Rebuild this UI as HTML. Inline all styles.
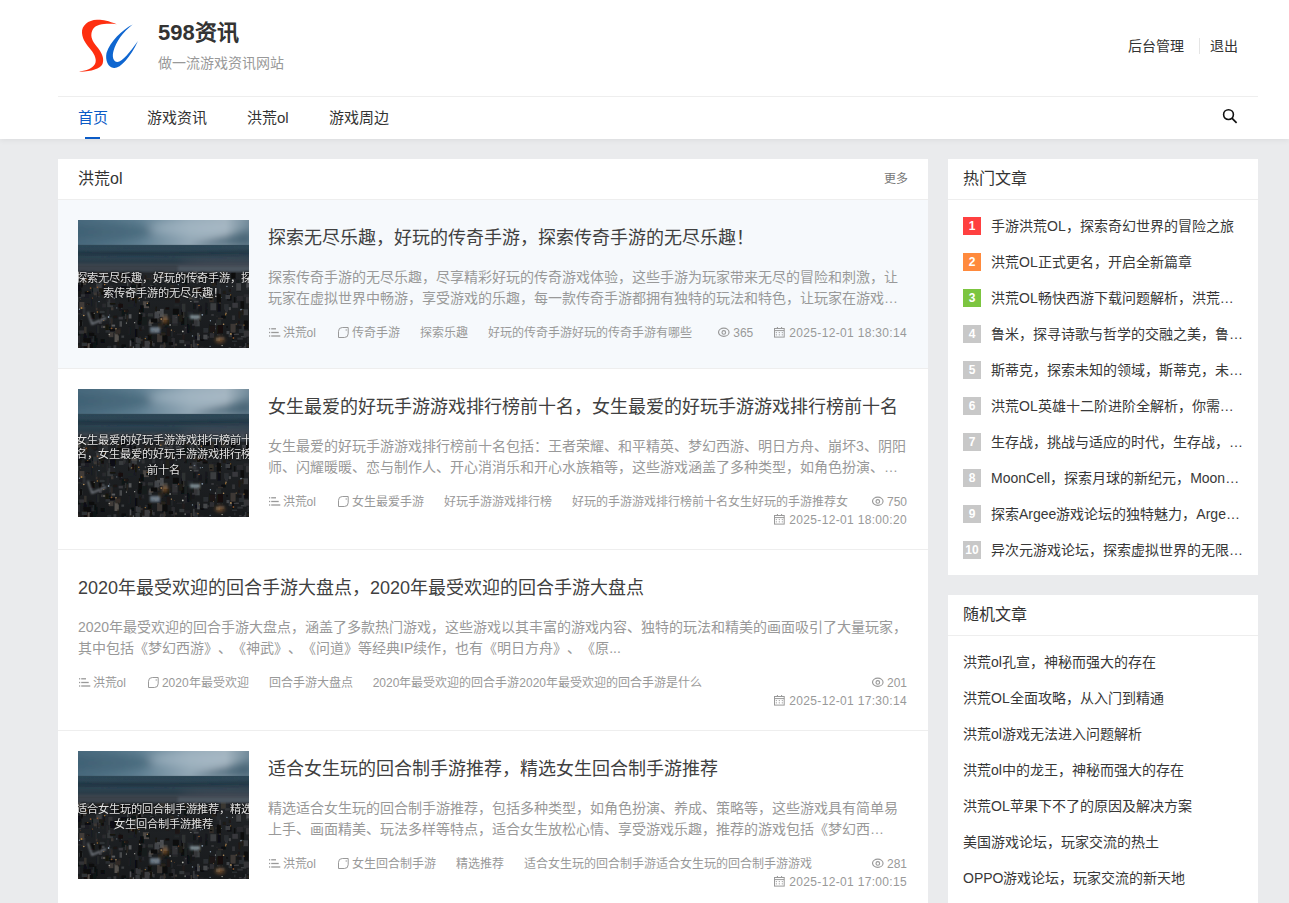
<!DOCTYPE html>
<html lang="zh-CN"><head><meta charset="utf-8"><style>
*{margin:0;padding:0;box-sizing:border-box}
html,body{width:1289px;height:903px;overflow:hidden}
body{text-spacing-trim:space-all;background:#eaebed;font-family:"Liberation Sans",sans-serif;color:#333;position:relative}
.hdr{position:absolute;left:0;top:0;width:1289px;height:139px;background:#fff;box-shadow:0 1px 6px rgba(0,0,0,.07)}
.sitename{position:absolute;left:158px;top:19px;font-size:22px;font-weight:bold;color:#333;line-height:28px}
.slogan{position:absolute;left:158px;top:53px;font-size:14px;color:#999;line-height:20px}
.toplinks{position:absolute;top:36px;font-size:14px;color:#333;line-height:20px}
.sep{position:absolute;left:1199px;top:38px;width:1px;height:16px;background:#e5e5e5}
.hline{position:absolute;left:58px;top:96px;width:1200px;height:1px;background:#eee}
.nav{position:absolute;top:108px;font-size:15px;line-height:20px;color:#333}
.nav.on{color:#0b5bc6}
.navbar{position:absolute;left:85px;top:137px;width:15px;height:2px;background:#0b5bc6}
.search{position:absolute;left:1221px;top:108px}
.card{position:absolute;background:#fff;overflow:hidden}
.chead{position:absolute;left:0;top:0;right:0;height:41px;border-bottom:1px solid #eee}
.ctitle{position:absolute;top:9px;font-size:16px;line-height:22px;color:#333}
.more{position:absolute;right:20px;top:11px;font-size:12px;color:#777;line-height:18px}
.art{position:absolute;left:0;width:870px;border-bottom:1px solid #eee}
.thumb{position:absolute;width:171px;height:128px;overflow:hidden}
.thumb svg{display:block}
.ttxt{position:absolute;left:0;top:0;width:171px;height:128px;font-size:11.2px;line-height:15px;color:#e4e4e4;text-shadow:0 0 2px rgba(0,0,0,.9),0 0 3px rgba(0,0,0,.6);will-change:transform;white-space:nowrap}
.atitle{position:absolute;font-size:18px;line-height:24px;color:#404040;white-space:nowrap}
.aex{position:absolute;font-size:14px;line-height:21px;color:#999;white-space:nowrap;overflow:hidden;width:640px}
.meta{position:absolute;font-size:12px;line-height:18px;color:#999;white-space:nowrap}
.meta.r{right:21px}
.mi{margin-right:20px}
.mi.c1{margin-right:22px}
.dt{letter-spacing:.33px}
.ic{vertical-align:top;margin-top:3px}
.hot{position:absolute;left:15px;font-size:14px;line-height:20px;color:#383838;white-space:nowrap}
.badge{display:inline-block;width:18px;height:18px;background:#c8c8c8;color:#fff;font-size:12px;font-weight:bold;text-align:center;line-height:18px;margin-right:10px;vertical-align:top;margin-top:1px}
</style></head><body>
<svg width="0" height="0" style="position:absolute"><defs>
<linearGradient id="sky" x1="0" y1="0" x2="1" y2="0"><stop offset="0" stop-color="#46677b"/><stop offset="0.35" stop-color="#5f7f92"/><stop offset="0.65" stop-color="#93a8b6"/><stop offset="0.85" stop-color="#a2b3bf"/><stop offset="1" stop-color="#6d8797"/></linearGradient>
<linearGradient id="skyv" x1="0" y1="0" x2="0" y2="1"><stop offset="0" stop-color="#000" stop-opacity="0"/><stop offset="0.7" stop-color="#1e3444" stop-opacity="0.15"/><stop offset="1" stop-color="#1e3444" stop-opacity="0.5"/></linearGradient>
<linearGradient id="band" x1="0" y1="0" x2="0" y2="1"><stop offset="0" stop-color="#2e4858"/><stop offset="0.35" stop-color="#253b49"/><stop offset="0.55" stop-color="#2f4654"/><stop offset="0.8" stop-color="#2a3c48"/><stop offset="1" stop-color="#3c4650"/></linearGradient>
<linearGradient id="city" x1="0" y1="0" x2="0" y2="1"><stop offset="0" stop-color="#2c3035"/><stop offset="0.5" stop-color="#202326"/><stop offset="1" stop-color="#17191b"/></linearGradient>
<radialGradient id="glow1" cx="0.5" cy="0.5" r="0.5"><stop offset="0" stop-color="#c08040" stop-opacity="0.6"/><stop offset="1" stop-color="#c08040" stop-opacity="0"/></radialGradient>
<filter id="bl"><feGaussianBlur stdDeviation="0.5"/></filter>
<filter id="bl4" x="-50%" y="-50%" width="200%" height="200%"><feGaussianBlur stdDeviation="4"/></filter>
<filter id="bl2"><feGaussianBlur stdDeviation="1.2"/></filter>
<g id="cityimg">
<rect width="171" height="128" fill="url(#city)"/>
<g filter="url(#bl)"><rect x="52.7" y="61.8" width="4.3" height="1.6" fill="#17130f"/><rect x="84.8" y="52.9" width="3.2" height="1.6" fill="#27231f"/><rect x="70.3" y="114.5" width="1.6" height="2.8" fill="#080a0d"/><rect x="65.4" y="126.1" width="1.2" height="7.9" fill="#080a0d"/><rect x="21.2" y="59.2" width="2.5" height="7.5" fill="#303235"/><rect x="61.2" y="92.7" width="1.3" height="1.5" fill="#46423e"/><rect x="115.1" y="83.4" width="2.6" height="5.7" fill="#121417"/><rect x="118.3" y="69.0" width="3.9" height="5.2" fill="#292b2e"/><rect x="123.7" y="72.5" width="5.9" height="1.9" fill="#100c08"/><rect x="81.6" y="53.1" width="4.3" height="7.1" fill="#36383b"/><rect x="149.2" y="74.5" width="4.5" height="5.8" fill="#0e1013"/><rect x="161.3" y="87.0" width="4.3" height="1.5" fill="#181a1d"/><rect x="109.2" y="127.5" width="5.1" height="3.3" fill="#130f0b"/><rect x="76.8" y="63.1" width="1.6" height="1.5" fill="#393b3e"/><rect x="18.6" y="69.3" width="3.0" height="8.0" fill="#393b3e"/><rect x="150.6" y="113.9" width="5.3" height="3.2" fill="#2f3134"/><rect x="58.8" y="119.0" width="5.8" height="2.2" fill="#332f2b"/><rect x="80.9" y="96.0" width="2.3" height="1.0" fill="#323437"/><rect x="60.6" y="94.2" width="5.8" height="6.5" fill="#080a0d"/><rect x="5.4" y="120.2" width="4.9" height="8.0" fill="#212326"/><rect x="64.7" y="81.1" width="1.5" height="6.1" fill="#332f2b"/><rect x="24.4" y="76.5" width="1.3" height="1.0" fill="#2f2b27"/><rect x="13.8" y="78.4" width="1.1" height="8.0" fill="#1a1c1f"/><rect x="56.8" y="78.4" width="1.6" height="7.8" fill="#1b1d20"/><rect x="77.5" y="87.7" width="1.4" height="1.8" fill="#1a1c1f"/><rect x="24.3" y="51.8" width="5.8" height="5.2" fill="#3a3632"/><rect x="91.1" y="52.1" width="3.6" height="8.8" fill="#3a3c3f"/><rect x="60.2" y="63.0" width="4.9" height="5.3" fill="#0a0c0f"/><rect x="53.7" y="67.4" width="5.1" height="8.9" fill="#3b3d40"/><rect x="125.5" y="67.7" width="3.6" height="3.8" fill="#100c08"/><rect x="0.9" y="71.8" width="2.3" height="6.5" fill="#3b3d40"/><rect x="168.9" y="124.5" width="2.8" height="2.8" fill="#25211d"/><rect x="30.4" y="65.9" width="4.1" height="8.2" fill="#313336"/><rect x="135.9" y="56.6" width="4.3" height="8.3" fill="#0e1013"/><rect x="127.3" y="87.3" width="1.9" height="7.3" fill="#101215"/><rect x="65.3" y="81.3" width="5.7" height="6.8" fill="#4e4a46"/><rect x="18.2" y="61.8" width="5.5" height="7.5" fill="#3c3e41"/><rect x="111.0" y="77.3" width="3.7" height="2.0" fill="#4c4844"/><rect x="165.9" y="100.7" width="3.6" height="8.5" fill="#080a0d"/><rect x="32.9" y="69.6" width="2.5" height="2.9" fill="#36383b"/><rect x="41.4" y="82.7" width="1.7" height="8.3" fill="#15171a"/><rect x="154.3" y="82.8" width="5.6" height="5.0" fill="#37393c"/><rect x="87.6" y="51.5" width="3.2" height="2.5" fill="#534f4b"/><rect x="78.9" y="106.6" width="3.8" height="3.6" fill="#242629"/><rect x="93.2" y="111.2" width="1.5" height="5.5" fill="#242629"/><rect x="84.8" y="93.8" width="4.8" height="8.3" fill="#35373a"/><rect x="103.2" y="89.4" width="3.6" height="6.5" fill="#0a0c0f"/><rect x="160.8" y="104.5" width="5.4" height="8.5" fill="#2c2e31"/><rect x="93.9" y="123.6" width="5.2" height="2.1" fill="#3d3935"/><rect x="38.1" y="55.7" width="4.3" height="7.3" fill="#343639"/><rect x="23.0" y="105.9" width="4.3" height="2.1" fill="#56524e"/><rect x="162.7" y="81.1" width="3.4" height="8.9" fill="#080a0d"/><rect x="24.3" y="83.7" width="3.6" height="3.7" fill="#2a2c2f"/><rect x="-0.6" y="93.2" width="3.2" height="1.1" fill="#36383b"/><rect x="105.2" y="90.0" width="1.3" height="8.9" fill="#3a3632"/><rect x="42.5" y="53.1" width="4.9" height="3.2" fill="#100c08"/><rect x="69.9" y="121.1" width="5.1" height="3.1" fill="#414346"/><rect x="118.6" y="57.0" width="1.3" height="6.5" fill="#4b4d50"/><rect x="8.7" y="123.2" width="4.2" height="7.4" fill="#514d49"/><rect x="147.0" y="85.4" width="2.7" height="5.4" fill="#393b3e"/><rect x="42.9" y="60.1" width="3.6" height="2.9" fill="#36322e"/><rect x="31.3" y="74.3" width="2.5" height="7.1" fill="#2c2e31"/><rect x="83.5" y="63.9" width="2.7" height="1.1" fill="#232528"/><rect x="92.4" y="64.8" width="3.4" height="8.5" fill="#2f2b27"/><rect x="139.3" y="83.7" width="3.5" height="7.7" fill="#0f1114"/><rect x="167.9" y="76.7" width="5.2" height="6.7" fill="#343639"/><rect x="66.8" y="77.1" width="1.3" height="2.0" fill="#444649"/><rect x="24.6" y="56.6" width="5.2" height="8.0" fill="#333538"/><rect x="45.3" y="68.9" width="2.5" height="4.7" fill="#313336"/><rect x="164.3" y="125.9" width="3.7" height="3.0" fill="#37393c"/><rect x="50.2" y="77.8" width="1.0" height="4.1" fill="#120e0a"/><rect x="84.3" y="50.4" width="2.3" height="1.7" fill="#282a2d"/><rect x="3.3" y="51.8" width="2.5" height="2.9" fill="#0c0e11"/><rect x="111.1" y="105.8" width="5.4" height="4.1" fill="#16181b"/><rect x="168.3" y="61.7" width="4.6" height="6.1" fill="#4c4e51"/><rect x="105.8" y="107.2" width="5.1" height="2.1" fill="#2f3134"/><rect x="84.3" y="115.1" width="5.0" height="7.6" fill="#080a0d"/><rect x="117.3" y="67.9" width="1.2" height="2.1" fill="#0c0e11"/><rect x="14.4" y="115.2" width="3.8" height="6.0" fill="#0c0e11"/><rect x="-3.4" y="112.2" width="4.7" height="5.0" fill="#0c0e11"/><rect x="111.4" y="55.2" width="4.7" height="3.0" fill="#333538"/><rect x="31.9" y="107.7" width="5.9" height="5.0" fill="#2b2d30"/><rect x="79.8" y="103.3" width="4.8" height="5.9" fill="#26221e"/><rect x="40.4" y="108.0" width="2.5" height="5.5" fill="#25211d"/><rect x="6.6" y="71.0" width="4.4" height="6.5" fill="#1b1d20"/><rect x="77.3" y="86.4" width="1.6" height="8.1" fill="#1b1713"/><rect x="167.2" y="123.0" width="1.1" height="4.7" fill="#3c3e41"/><rect x="43.0" y="66.4" width="5.7" height="2.7" fill="#080a0d"/><rect x="20.8" y="90.9" width="5.8" height="2.1" fill="#2f3134"/><rect x="119.1" y="68.0" width="5.5" height="4.9" fill="#14100c"/><rect x="-3.4" y="88.4" width="3.3" height="3.4" fill="#303235"/><rect x="143.0" y="50.1" width="4.8" height="7.7" fill="#3b3733"/><rect x="158.1" y="105.6" width="5.5" height="3.3" fill="#141619"/><rect x="99.1" y="78.1" width="3.1" height="3.2" fill="#3b3733"/><rect x="13.8" y="115.1" width="2.4" height="8.5" fill="#242629"/><rect x="29.2" y="79.1" width="5.8" height="8.1" fill="#35373a"/><rect x="106.4" y="121.2" width="5.7" height="5.4" fill="#222427"/><rect x="74.9" y="108.7" width="4.2" height="3.3" fill="#25211d"/><rect x="158.2" y="59.9" width="3.4" height="3.7" fill="#191b1e"/><rect x="41.5" y="101.2" width="2.5" height="5.5" fill="#46484b"/><rect x="25.3" y="62.6" width="2.0" height="8.2" fill="#141619"/><rect x="170.4" y="85.1" width="1.7" height="2.5" fill="#2c2824"/><rect x="55.8" y="57.1" width="2.2" height="3.1" fill="#080a0d"/><rect x="68.2" y="82.3" width="3.6" height="4.0" fill="#101215"/><rect x="6.9" y="71.6" width="5.8" height="2.0" fill="#080a0d"/><rect x="33.8" y="71.1" width="2.2" height="4.2" fill="#232528"/><rect x="162.9" y="116.2" width="5.4" height="1.2" fill="#45474a"/><rect x="78.8" y="95.8" width="1.0" height="4.1" fill="#2a2c2f"/><rect x="140.5" y="116.7" width="5.9" height="3.0" fill="#2d2f32"/><rect x="115.4" y="123.4" width="4.6" height="6.2" fill="#2c2e31"/><rect x="76.0" y="93.0" width="1.2" height="7.3" fill="#292b2e"/><rect x="49.2" y="60.0" width="2.3" height="6.1" fill="#55575a"/><rect x="15.6" y="55.5" width="3.6" height="5.7" fill="#181a1d"/><rect x="-2.2" y="73.5" width="3.3" height="8.7" fill="#2e3033"/><rect x="150.7" y="87.1" width="2.2" height="3.0" fill="#45474a"/><rect x="-0.2" y="88.9" width="4.4" height="4.4" fill="#1b1d20"/><rect x="112.8" y="122.2" width="2.1" height="1.3" fill="#17191c"/><rect x="30.7" y="112.2" width="4.7" height="5.0" fill="#3f3b37"/><rect x="165.7" y="74.3" width="5.1" height="2.8" fill="#2a2c2f"/><rect x="162.6" y="88.7" width="1.9" height="2.8" fill="#484a4d"/><rect x="112.4" y="124.0" width="1.7" height="4.1" fill="#393531"/><rect x="5.1" y="54.7" width="3.0" height="8.2" fill="#5d5f62"/><rect x="124.2" y="127.8" width="5.7" height="3.6" fill="#383a3d"/><rect x="1.6" y="101.8" width="2.9" height="4.0" fill="#535558"/><rect x="25.6" y="50.2" width="2.4" height="3.8" fill="#2e3033"/><rect x="32.3" y="77.8" width="5.1" height="7.6" fill="#202225"/><rect x="4.6" y="86.9" width="2.9" height="8.4" fill="#2b2d30"/><rect x="1.3" y="82.0" width="5.1" height="7.1" fill="#3f3b37"/><rect x="2.1" y="54.9" width="5.6" height="3.1" fill="#232528"/><rect x="43.7" y="124.7" width="4.1" height="3.1" fill="#080a0d"/><rect x="51.4" y="71.5" width="1.0" height="7.0" fill="#3e4043"/><rect x="0.2" y="68.2" width="3.4" height="8.7" fill="#141619"/><rect x="63.6" y="69.6" width="3.1" height="4.9" fill="#303235"/><rect x="125.2" y="114.2" width="4.9" height="5.9" fill="#1d1f22"/><rect x="51.9" y="78.2" width="4.9" height="1.6" fill="#37332f"/><rect x="7.3" y="52.6" width="3.8" height="3.6" fill="#46484b"/><rect x="150.6" y="127.1" width="2.3" height="1.7" fill="#393b3e"/><rect x="74.2" y="68.3" width="3.1" height="6.0" fill="#323437"/><rect x="126.9" y="116.1" width="4.3" height="2.0" fill="#2d2f32"/><rect x="61.3" y="107.6" width="2.0" height="3.0" fill="#1c1814"/><rect x="22.8" y="119.0" width="3.9" height="3.6" fill="#080a0d"/><rect x="36.5" y="113.1" width="4.3" height="8.9" fill="#55514d"/><rect x="79.1" y="113.9" width="5.2" height="8.3" fill="#3d3935"/><rect x="29.2" y="125.9" width="3.9" height="8.4" fill="#282a2d"/><rect x="147.6" y="85.0" width="2.3" height="7.2" fill="#2d2f32"/><rect x="104.5" y="67.0" width="2.8" height="2.1" fill="#282420"/><rect x="40.6" y="96.8" width="4.3" height="2.6" fill="#37393c"/><rect x="28.4" y="74.4" width="2.0" height="7.4" fill="#25272a"/><rect x="7.1" y="57.9" width="3.0" height="5.4" fill="#25211d"/><rect x="117.7" y="82.0" width="2.4" height="3.5" fill="#1c1e21"/><rect x="50.7" y="94.2" width="2.8" height="4.3" fill="#545659"/><rect x="30.5" y="106.8" width="2.0" height="1.0" fill="#080a0d"/><rect x="70.2" y="114.0" width="3.0" height="8.1" fill="#1f1b17"/><rect x="92.5" y="100.0" width="5.5" height="1.7" fill="#27292c"/><rect x="60.9" y="89.3" width="1.7" height="3.3" fill="#100c08"/><rect x="81.8" y="112.8" width="5.8" height="2.6" fill="#25211d"/><rect x="161.0" y="126.1" width="3.4" height="1.4" fill="#37393c"/><rect x="104.6" y="114.3" width="1.8" height="7.3" fill="#221e1a"/><rect x="66.8" y="116.0" width="5.1" height="2.5" fill="#282a2d"/><rect x="63.1" y="59.6" width="2.2" height="6.8" fill="#393b3e"/><rect x="3.2" y="93.9" width="4.8" height="1.3" fill="#292b2e"/><rect x="92.3" y="98.9" width="2.5" height="4.4" fill="#1a1c1f"/><rect x="70.5" y="101.4" width="3.2" height="4.5" fill="#424447"/><rect x="37.2" y="109.6" width="4.9" height="4.7" fill="#302c28"/><rect x="78.8" y="58.4" width="1.6" height="4.4" fill="#37393c"/><rect x="3.1" y="99.6" width="1.4" height="6.9" fill="#303235"/><rect x="85.5" y="54.2" width="3.5" height="4.0" fill="#2f3134"/><rect x="170.3" y="107.1" width="5.1" height="2.5" fill="#202225"/><rect x="82.1" y="124.6" width="5.6" height="2.3" fill="#383430"/><rect x="57.4" y="109.0" width="1.8" height="8.2" fill="#080a0d"/><rect x="138.7" y="61.2" width="3.5" height="8.4" fill="#282a2d"/><rect x="51.8" y="52.9" width="1.9" height="2.3" fill="#343639"/><rect x="114.9" y="119.8" width="1.8" height="7.3" fill="#383a3d"/><rect x="59.0" y="118.1" width="3.8" height="5.6" fill="#35373a"/><rect x="14.3" y="127.5" width="4.1" height="4.2" fill="#292b2e"/><rect x="97.0" y="78.1" width="4.8" height="4.5" fill="#1b1713"/><rect x="126.1" y="53.8" width="5.1" height="3.0" fill="#080a0d"/><rect x="112.1" y="74.4" width="1.0" height="1.3" fill="#100c08"/><rect x="103.8" y="83.7" width="3.6" height="8.2" fill="#2e3033"/><rect x="-0.1" y="50.2" width="2.8" height="1.9" fill="#2f3134"/><rect x="35.2" y="95.5" width="3.9" height="2.6" fill="#1a1612"/><rect x="159.9" y="69.0" width="1.7" height="1.8" fill="#121417"/><rect x="148.5" y="111.0" width="3.0" height="3.1" fill="#434548"/><rect x="57.3" y="100.4" width="3.2" height="8.5" fill="#26282b"/><rect x="39.5" y="120.5" width="1.2" height="5.3" fill="#1e1a16"/><rect x="132.3" y="51.0" width="3.8" height="8.5" fill="#35312d"/><rect x="30.9" y="97.4" width="3.5" height="6.1" fill="#292b2e"/><rect x="48.5" y="53.8" width="5.4" height="7.3" fill="#17191c"/><rect x="-2.9" y="115.9" width="4.7" height="4.7" fill="#2a2622"/><rect x="14.4" y="68.1" width="1.2" height="3.7" fill="#0b0d10"/><rect x="117.6" y="115.9" width="4.6" height="3.1" fill="#0d0f12"/><rect x="87.6" y="70.7" width="4.2" height="8.7" fill="#24201c"/><rect x="150.0" y="51.2" width="2.3" height="2.9" fill="#212326"/><rect x="53.2" y="118.7" width="2.6" height="2.9" fill="#080a0d"/><rect x="106.4" y="104.0" width="4.3" height="8.8" fill="#080a0d"/><rect x="146.1" y="84.1" width="4.6" height="5.6" fill="#2c2e31"/><rect x="33.1" y="98.6" width="1.4" height="8.3" fill="#2f2b27"/><rect x="158.6" y="76.9" width="1.7" height="1.2" fill="#302c28"/><rect x="117.2" y="99.4" width="4.5" height="6.9" fill="#3e4043"/><rect x="139.1" y="113.9" width="5.5" height="1.5" fill="#2f3134"/><rect x="156.0" y="123.7" width="1.5" height="2.6" fill="#282a2d"/><rect x="138.1" y="99.5" width="5.1" height="6.1" fill="#27292c"/><rect x="13.5" y="57.6" width="4.8" height="2.6" fill="#221e1a"/><rect x="40.9" y="72.0" width="4.6" height="3.9" fill="#383a3d"/><rect x="164.7" y="89.3" width="5.3" height="5.9" fill="#3a3c3f"/><rect x="131.3" y="77.0" width="4.5" height="5.3" fill="#302c28"/><rect x="146.9" y="57.1" width="5.1" height="2.4" fill="#323437"/><rect x="167.1" y="50.3" width="3.5" height="4.9" fill="#242629"/><rect x="28.3" y="88.6" width="2.7" height="7.7" fill="#202225"/><rect x="33.6" y="104.6" width="3.5" height="1.9" fill="#585a5d"/><rect x="10.2" y="111.5" width="4.5" height="7.3" fill="#15171a"/><rect x="65.1" y="119.5" width="1.4" height="8.1" fill="#1d1915"/><rect x="32.1" y="70.5" width="5.5" height="5.0" fill="#100c08"/><rect x="76.7" y="91.5" width="4.8" height="7.0" fill="#434548"/><rect x="57.0" y="75.5" width="1.8" height="7.7" fill="#191511"/><rect x="72.8" y="110.3" width="3.9" height="2.0" fill="#080a0d"/><rect x="150.9" y="68.6" width="2.0" height="3.4" fill="#1f1b17"/><rect x="23.3" y="69.3" width="2.6" height="5.2" fill="#100c08"/><rect x="53.4" y="64.8" width="5.9" height="6.8" fill="#595551"/><rect x="63.2" y="126.7" width="5.0" height="6.9" fill="#45474a"/><rect x="30.3" y="99.8" width="1.5" height="2.7" fill="#1f2124"/><rect x="134.4" y="104.1" width="3.5" height="6.1" fill="#27292c"/><rect x="20.8" y="97.1" width="3.0" height="6.9" fill="#37393c"/><rect x="127.1" y="82.9" width="2.1" height="6.8" fill="#17191c"/><rect x="131.5" y="104.6" width="5.3" height="6.4" fill="#141619"/><rect x="105.9" y="57.6" width="3.1" height="7.3" fill="#111316"/><rect x="106.2" y="69.5" width="3.1" height="4.6" fill="#131518"/><rect x="158.8" y="64.3" width="4.3" height="7.2" fill="#141619"/><rect x="81.7" y="126.0" width="1.2" height="5.3" fill="#383a3d"/><rect x="86.9" y="57.9" width="3.9" height="5.3" fill="#444649"/><rect x="85.6" y="99.9" width="5.1" height="5.2" fill="#100c08"/><rect x="115.8" y="80.6" width="4.8" height="2.0" fill="#404245"/><rect x="58.2" y="54.4" width="2.4" height="4.2" fill="#3a3c3f"/><rect x="118.2" y="77.5" width="2.3" height="2.8" fill="#25272a"/><rect x="160.5" y="91.1" width="2.1" height="7.4" fill="#201c18"/><rect x="131.9" y="113.1" width="4.2" height="4.8" fill="#2d2f32"/><rect x="35.5" y="125.2" width="2.8" height="6.1" fill="#343639"/><rect x="47.5" y="92.8" width="1.6" height="7.7" fill="#080a0d"/><rect x="144.9" y="70.9" width="2.9" height="3.0" fill="#1f1b17"/><rect x="122.3" y="71.9" width="2.2" height="3.4" fill="#2a2c2f"/><rect x="71.0" y="99.7" width="4.3" height="3.9" fill="#524e4a"/><rect x="140.9" y="120.7" width="4.9" height="2.1" fill="#111316"/><rect x="106.8" y="51.2" width="1.1" height="8.6" fill="#221e1a"/><rect x="21.0" y="68.2" width="4.9" height="3.8" fill="#1e1a16"/><rect x="154.2" y="111.8" width="1.8" height="8.1" fill="#080a0d"/><rect x="152.4" y="111.5" width="5.2" height="2.6" fill="#0b0d10"/><rect x="88.9" y="107.9" width="3.2" height="8.1" fill="#1b1713"/><rect x="20.4" y="88.5" width="1.3" height="4.7" fill="#26221e"/><rect x="82.0" y="88.9" width="3.7" height="7.9" fill="#4e5053"/><rect x="94.4" y="101.9" width="5.2" height="4.0" fill="#25272a"/><rect x="164.1" y="55.9" width="4.2" height="6.1" fill="#414346"/><rect x="159.0" y="75.8" width="5.9" height="5.1" fill="#292b2e"/><rect x="153.1" y="52.6" width="4.6" height="6.0" fill="#0c0e11"/><rect x="79.0" y="91.0" width="4.9" height="2.7" fill="#494b4e"/><rect x="69.9" y="93.2" width="5.1" height="3.3" fill="#2e3033"/><rect x="43.5" y="89.5" width="5.9" height="6.2" fill="#101215"/><rect x="53.9" y="74.7" width="2.5" height="5.7" fill="#120e0a"/><rect x="122.5" y="119.1" width="3.7" height="1.4" fill="#080a0d"/><rect x="-2.9" y="64.8" width="5.6" height="5.9" fill="#0e1013"/><rect x="103.1" y="98.1" width="4.1" height="6.6" fill="#080a0d"/><rect x="115.2" y="66.6" width="4.3" height="4.7" fill="#2c2824"/><rect x="2.5" y="110.4" width="5.6" height="6.2" fill="#191b1e"/><rect x="140.0" y="111.4" width="3.8" height="3.1" fill="#1c1e21"/><rect x="71.4" y="100.1" width="5.7" height="1.4" fill="#393b3e"/><rect x="2.9" y="59.3" width="5.1" height="5.6" fill="#403c38"/><rect x="63.7" y="96.2" width="5.7" height="8.8" fill="#181a1d"/><rect x="68.2" y="58.0" width="4.2" height="2.7" fill="#2e2a26"/><rect x="115.7" y="59.5" width="5.8" height="1.7" fill="#27292c"/><rect x="18.6" y="51.4" width="4.6" height="2.9" fill="#2a2622"/><rect x="131.5" y="105.7" width="5.3" height="6.8" fill="#1d1915"/><rect x="106.0" y="105.3" width="3.3" height="8.5" fill="#222427"/><rect x="-2.0" y="51.1" width="4.3" height="7.5" fill="#64605c"/><rect x="50.4" y="106.9" width="1.8" height="7.9" fill="#1c1e21"/><rect x="96.6" y="84.2" width="4.4" height="2.2" fill="#242629"/><rect x="59.6" y="100.3" width="4.1" height="4.3" fill="#080a0d"/><rect x="133.3" y="94.2" width="2.5" height="1.5" fill="#3d3f42"/><rect x="119.1" y="114.5" width="2.7" height="5.8" fill="#4d4f52"/><rect x="50.0" y="83.4" width="5.4" height="4.0" fill="#1e2023"/><rect x="101.3" y="119.9" width="5.0" height="3.3" fill="#35373a"/><rect x="98.7" y="113.6" width="5.4" height="1.3" fill="#242629"/><rect x="138.1" y="117.6" width="3.9" height="3.2" fill="#3b3d40"/><rect x="155.9" y="77.1" width="1.4" height="5.4" fill="#080a0d"/><rect x="31.1" y="108.5" width="5.7" height="2.9" fill="#0a0c0f"/><rect x="32.2" y="69.9" width="4.8" height="7.3" fill="#0f1114"/><rect x="11.3" y="112.9" width="4.9" height="2.9" fill="#080a0d"/><rect x="87.3" y="87.2" width="3.9" height="2.5" fill="#15110d"/><rect x="27.6" y="104.7" width="2.8" height="5.5" fill="#16120e"/><rect x="3.8" y="127.8" width="2.9" height="1.8" fill="#333538"/><rect x="133.8" y="62.2" width="4.0" height="3.8" fill="#27231f"/><rect x="169.3" y="117.6" width="3.4" height="5.5" fill="#232528"/><rect x="132.4" y="83.2" width="5.7" height="7.1" fill="#3b3d40"/><rect x="2.6" y="65.7" width="1.9" height="1.7" fill="#100c08"/><rect x="93.5" y="117.9" width="3.3" height="8.6" fill="#2a2c2f"/><rect x="65.5" y="59.4" width="5.8" height="3.1" fill="#1f2124"/><rect x="108.1" y="124.6" width="4.3" height="4.1" fill="#17191c"/><rect x="169.6" y="67.3" width="1.2" height="3.0" fill="#282a2d"/><rect x="154.0" y="120.6" width="5.2" height="1.4" fill="#2b2d30"/><rect x="168.4" y="54.3" width="1.7" height="7.0" fill="#080a0d"/><rect x="114.5" y="73.3" width="4.0" height="7.1" fill="#333538"/><rect x="17.7" y="87.5" width="1.8" height="2.9" fill="#37332f"/><rect x="114.6" y="51.0" width="4.6" height="2.6" fill="#5d5955"/><rect x="159.4" y="117.6" width="5.4" height="2.1" fill="#2f3134"/><rect x="13.0" y="122.4" width="5.2" height="6.0" fill="#101215"/><rect x="79.6" y="99.0" width="1.7" height="2.8" fill="#312d29"/><rect x="120.9" y="93.2" width="1.7" height="8.0" fill="#292521"/><rect x="43.4" y="115.5" width="2.7" height="2.3" fill="#3a3c3f"/><rect x="51.7" y="120.4" width="1.6" height="8.8" fill="#4f5154"/><rect x="33.0" y="87.2" width="2.4" height="3.1" fill="#3c3834"/><rect x="59.7" y="127.3" width="6.0" height="8.4" fill="#323437"/><rect x="6.1" y="106.7" width="2.5" height="8.8" fill="#36322e"/><rect x="137.2" y="76.6" width="1.7" height="1.0" fill="#393531"/><rect x="72.2" y="121.1" width="2.1" height="5.6" fill="#14100c"/><rect x="27.5" y="110.1" width="4.6" height="2.6" fill="#2c2e31"/><rect x="82.7" y="71.4" width="2.0" height="5.9" fill="#282a2d"/><rect x="138.0" y="95.5" width="2.0" height="1.5" fill="#212326"/><rect x="5.7" y="113.2" width="2.7" height="7.7" fill="#0d0f12"/><rect x="82.3" y="51.2" width="5.6" height="4.8" fill="#383430"/><rect x="141.5" y="78.6" width="1.8" height="4.0" fill="#17191c"/><rect x="-3.2" y="90.5" width="3.2" height="5.1" fill="#3d3f42"/><rect x="147.5" y="75.0" width="4.6" height="4.1" fill="#3b3d40"/><rect x="6.7" y="118.1" width="5.8" height="5.0" fill="#090b0e"/><rect x="-0.4" y="125.5" width="2.1" height="2.5" fill="#292521"/><rect x="39.8" y="113.7" width="1.2" height="1.8" fill="#27231f"/><rect x="100.9" y="95.0" width="3.6" height="6.6" fill="#1e1a16"/><rect x="148.2" y="105.9" width="1.2" height="2.0" fill="#0a0c0f"/><rect x="17.4" y="81.6" width="1.7" height="5.7" fill="#25272a"/><rect x="21.8" y="94.7" width="4.7" height="2.3" fill="#3b3d40"/><rect x="69.6" y="115.5" width="3.6" height="4.2" fill="#080a0d"/><rect x="132.0" y="76.4" width="2.2" height="3.7" fill="#080a0d"/><rect x="155.7" y="113.6" width="5.2" height="1.4" fill="#3c3e41"/><rect x="163.6" y="122.9" width="2.2" height="4.4" fill="#15171a"/><rect x="8.1" y="83.8" width="3.5" height="1.2" fill="#1c1814"/><rect x="165.7" y="110.6" width="5.7" height="6.1" fill="#343639"/><rect x="2.0" y="100.0" width="2.3" height="6.4" fill="#080a0d"/><rect x="90.9" y="122.1" width="4.1" height="3.0" fill="#0c0e11"/><rect x="46.3" y="73.8" width="4.2" height="2.0" fill="#212326"/><rect x="163.3" y="90.1" width="2.3" height="4.7" fill="#1f1b17"/><rect x="19.0" y="72.9" width="3.0" height="3.3" fill="#292521"/><rect x="11.4" y="92.6" width="5.2" height="5.9" fill="#100c08"/><rect x="120.3" y="85.9" width="3.7" height="5.9" fill="#16181b"/><rect x="50.3" y="68.9" width="2.1" height="5.1" fill="#16120e"/><rect x="57.7" y="117.2" width="2.2" height="5.5" fill="#37393c"/><rect x="45.8" y="127.0" width="2.5" height="7.2" fill="#282a2d"/><rect x="73.0" y="54.8" width="2.9" height="4.5" fill="#2a2c2f"/><rect x="15.1" y="67.6" width="5.8" height="6.9" fill="#2f3134"/><rect x="114.2" y="98.1" width="5.2" height="7.6" fill="#343639"/><rect x="125.3" y="108.0" width="4.8" height="4.8" fill="#2b2d30"/><rect x="18.3" y="117.9" width="1.0" height="7.1" fill="#080a0d"/><rect x="83.1" y="125.1" width="3.9" height="4.3" fill="#2d2f32"/><rect x="62.4" y="85.3" width="3.3" height="6.8" fill="#080a0d"/><rect x="64.4" y="93.3" width="2.9" height="3.6" fill="#2d2f32"/><rect x="73.7" y="64.4" width="2.5" height="2.2" fill="#080a0d"/><rect x="97.8" y="56.9" width="5.6" height="3.6" fill="#3b3d40"/><rect x="31.8" y="83.3" width="5.6" height="1.1" fill="#100c08"/><rect x="94.9" y="88.8" width="5.6" height="7.2" fill="#080a0d"/><rect x="86.5" y="103.4" width="2.9" height="3.9" fill="#111316"/><rect x="57.4" y="123.9" width="4.4" height="5.2" fill="#35373a"/><rect x="94.2" y="94.8" width="5.4" height="8.7" fill="#303235"/><rect x="73.0" y="98.7" width="6.0" height="3.7" fill="#100c08"/><rect x="51.7" y="126.3" width="5.1" height="5.1" fill="#24201c"/><rect x="152.5" y="103.8" width="5.1" height="8.9" fill="#3d3935"/><rect x="46.7" y="89.9" width="3.5" height="2.5" fill="#1d1915"/><rect x="106.3" y="97.0" width="2.8" height="8.9" fill="#1f2124"/><rect x="133.8" y="73.9" width="4.5" height="1.0" fill="#1f2124"/><rect x="143.4" y="95.7" width="4.3" height="2.6" fill="#080a0d"/><rect x="109.2" y="91.5" width="6.0" height="5.6" fill="#242629"/><rect x="17.3" y="62.2" width="4.8" height="1.9" fill="#2e3033"/><rect x="140.0" y="97.8" width="5.0" height="1.5" fill="#332f2b"/><rect x="130.9" y="75.2" width="4.6" height="3.8" fill="#34302c"/><rect x="154.2" y="95.4" width="2.7" height="4.6" fill="#333538"/><rect x="5.6" y="119.5" width="3.9" height="8.7" fill="#100c08"/><rect x="3.7" y="122.6" width="5.3" height="3.5" fill="#2f3134"/><rect x="138.8" y="73.7" width="4.0" height="8.7" fill="#100c08"/><rect x="64.2" y="106.0" width="2.1" height="3.5" fill="#25272a"/><rect x="80.8" y="111.8" width="2.2" height="2.4" fill="#1b1d20"/><rect x="46.9" y="93.8" width="1.6" height="5.3" fill="#2e3033"/><rect x="66.6" y="55.1" width="1.6" height="7.6" fill="#221e1a"/><rect x="45.6" y="68.5" width="1.2" height="6.3" fill="#313336"/><rect x="23.3" y="105.1" width="1.5" height="3.2" fill="#292b2e"/><rect x="142.4" y="112.8" width="1.8" height="3.8" fill="#1a1c1f"/><rect x="62.0" y="124.8" width="2.0" height="8.6" fill="#141619"/><rect x="18.9" y="105.1" width="2.3" height="8.2" fill="#232528"/><rect x="60.4" y="69.2" width="4.0" height="2.7" fill="#2b2d30"/><rect x="91.0" y="71.1" width="4.9" height="4.1" fill="#1b1d20"/><rect x="95.3" y="74.2" width="2.9" height="1.7" fill="#36383b"/><rect x="112.0" y="58.5" width="3.8" height="3.9" fill="#4a4c4f"/><rect x="48.0" y="55.1" width="2.6" height="2.8" fill="#3c3e41"/><rect x="66.6" y="120.9" width="4.9" height="8.1" fill="#3c3e41"/><rect x="19.1" y="71.6" width="1.1" height="6.4" fill="#191b1e"/><rect x="111.3" y="104.5" width="2.2" height="7.8" fill="#121417"/><rect x="106.0" y="64.2" width="1.6" height="8.3" fill="#282420"/><rect x="3.0" y="62.6" width="2.0" height="3.4" fill="#080a0d"/><rect x="2.9" y="74.3" width="4.2" height="2.4" fill="#333538"/><rect x="40.6" y="83.9" width="4.4" height="3.8" fill="#130f0b"/><rect x="142.0" y="110.6" width="2.4" height="1.3" fill="#3e3a36"/><rect x="38.8" y="58.7" width="5.0" height="2.7" fill="#0c0e11"/><rect x="127.2" y="56.7" width="4.5" height="4.1" fill="#232528"/><rect x="11.7" y="123.8" width="3.1" height="8.4" fill="#080a0d"/><rect x="125.3" y="114.7" width="4.1" height="4.6" fill="#444649"/><rect x="85.6" y="122.4" width="1.6" height="7.1" fill="#37332f"/><rect x="119.0" y="112.8" width="2.3" height="5.4" fill="#424447"/><rect x="39.7" y="54.6" width="2.8" height="4.3" fill="#26221e"/><rect x="50.3" y="60.7" width="4.5" height="6.4" fill="#25272a"/><rect x="73.9" y="123.0" width="2.8" height="3.4" fill="#343639"/><rect x="20.8" y="93.9" width="2.7" height="7.5" fill="#100c08"/><rect x="112.6" y="96.7" width="3.3" height="7.1" fill="#181a1d"/><rect x="16.0" y="72.6" width="2.8" height="2.7" fill="#3c3834"/><rect x="118.8" y="84.9" width="1.6" height="3.6" fill="#2a2c2f"/><rect x="59.5" y="63.1" width="1.4" height="1.1" fill="#504c48"/><rect x="121.5" y="126.5" width="3.8" height="1.9" fill="#222427"/><rect x="72.0" y="64.8" width="3.7" height="1.1" fill="#3f4144"/><rect x="159.7" y="100.9" width="2.3" height="3.0" fill="#1c1814"/><rect x="0.8" y="110.4" width="5.2" height="3.4" fill="#303235"/><rect x="158.2" y="63.1" width="4.9" height="7.6" fill="#404245"/><rect x="53.2" y="64.4" width="5.1" height="3.6" fill="#111316"/><rect x="141.5" y="68.7" width="1.2" height="5.5" fill="#383a3d"/><rect x="139.5" y="105.0" width="5.5" height="8.6" fill="#120e0a"/><rect x="48.4" y="95.3" width="1.4" height="6.5" fill="#2c2824"/><rect x="73.6" y="125.6" width="1.4" height="1.3" fill="#16181b"/><rect x="-3.5" y="115.6" width="5.3" height="7.3" fill="#292b2e"/><circle cx="48.4" cy="103.0" r="0.6" fill="#d8d8d0" opacity="0.8"/><circle cx="152.3" cy="58.6" r="0.3" fill="#e0b070" opacity="0.8"/><circle cx="154.6" cy="66.2" r="0.5" fill="#d8d8d0" opacity="0.8"/><circle cx="137.5" cy="104.0" r="0.6" fill="#d8d8d0" opacity="0.8"/><circle cx="14.5" cy="78.0" r="0.6" fill="#a06030" opacity="0.8"/><circle cx="155.4" cy="118.0" r="0.9" fill="#a06030" opacity="0.8"/><circle cx="106.0" cy="114.0" r="0.3" fill="#7a8a9a" opacity="0.8"/><circle cx="56.7" cy="102.7" r="0.6" fill="#d8d8d0" opacity="0.8"/><circle cx="162.9" cy="89.6" r="0.7" fill="#9fb4c8" opacity="0.8"/><circle cx="148.0" cy="93.2" r="0.7" fill="#e0b070" opacity="0.8"/><circle cx="38.0" cy="108.7" r="0.7" fill="#e0b070" opacity="0.8"/><circle cx="112.9" cy="81.5" r="0.6" fill="#d8d8d0" opacity="0.8"/><circle cx="61.6" cy="71.8" r="0.6" fill="#9fb4c8" opacity="0.8"/><circle cx="19.5" cy="67.4" r="0.8" fill="#a06030" opacity="0.8"/><circle cx="128.2" cy="70.4" r="0.8" fill="#7a8a9a" opacity="0.8"/><circle cx="16.2" cy="93.3" r="0.5" fill="#d8d8d0" opacity="0.8"/><circle cx="38.8" cy="87.9" r="0.6" fill="#7a8a9a" opacity="0.8"/><circle cx="19.3" cy="92.0" r="0.7" fill="#c98a3a" opacity="0.8"/><circle cx="145.6" cy="104.3" r="0.8" fill="#e0b070" opacity="0.8"/><circle cx="147.7" cy="94.7" r="0.7" fill="#c98a3a" opacity="0.8"/><circle cx="107.1" cy="125.1" r="0.6" fill="#d8d8d0" opacity="0.8"/><circle cx="142.0" cy="83.0" r="0.4" fill="#e0b070" opacity="0.8"/><circle cx="96.3" cy="111.3" r="0.4" fill="#a06030" opacity="0.8"/><circle cx="9.8" cy="71.5" r="0.5" fill="#c98a3a" opacity="0.8"/><circle cx="120.0" cy="124.7" r="0.6" fill="#c98a3a" opacity="0.8"/><circle cx="121.0" cy="85.5" r="0.8" fill="#a06030" opacity="0.8"/><circle cx="169.1" cy="68.9" r="0.4" fill="#7a8a9a" opacity="0.8"/><circle cx="148.9" cy="66.4" r="0.7" fill="#9fb4c8" opacity="0.8"/><circle cx="137.5" cy="108.5" r="0.3" fill="#9fb4c8" opacity="0.8"/><circle cx="21.0" cy="81.6" r="0.7" fill="#9fb4c8" opacity="0.8"/><circle cx="123.4" cy="57.2" r="0.7" fill="#c98a3a" opacity="0.8"/><circle cx="60.8" cy="78.2" r="0.7" fill="#c98a3a" opacity="0.8"/><circle cx="158.2" cy="104.0" r="0.5" fill="#e0b070" opacity="0.8"/><circle cx="118.7" cy="55.6" r="0.9" fill="#d8d8d0" opacity="0.8"/><circle cx="19.4" cy="55.6" r="0.4" fill="#9fb4c8" opacity="0.8"/><circle cx="31.7" cy="95.0" r="0.5" fill="#7a8a9a" opacity="0.8"/><circle cx="114.5" cy="115.9" r="0.7" fill="#9fb4c8" opacity="0.8"/><circle cx="92.1" cy="105.0" r="0.8" fill="#d8d8d0" opacity="0.8"/><circle cx="2.4" cy="79.3" r="0.4" fill="#a06030" opacity="0.8"/><circle cx="82.8" cy="56.3" r="0.8" fill="#c98a3a" opacity="0.8"/><circle cx="31.2" cy="114.6" r="0.7" fill="#d8d8d0" opacity="0.8"/><circle cx="144.1" cy="125.6" r="0.7" fill="#d8d8d0" opacity="0.8"/><circle cx="67.3" cy="118.6" r="0.7" fill="#c98a3a" opacity="0.8"/><circle cx="61.7" cy="93.1" r="0.5" fill="#e0b070" opacity="0.8"/><circle cx="100.8" cy="57.2" r="0.4" fill="#9fb4c8" opacity="0.8"/><circle cx="124.4" cy="78.5" r="0.6" fill="#9fb4c8" opacity="0.8"/><circle cx="53.8" cy="78.8" r="0.6" fill="#e0b070" opacity="0.8"/><circle cx="3.5" cy="88.0" r="0.9" fill="#c98a3a" opacity="0.8"/><circle cx="107.9" cy="107.8" r="0.4" fill="#d8d8d0" opacity="0.8"/><circle cx="46.7" cy="91.0" r="0.5" fill="#a06030" opacity="0.8"/><circle cx="98.1" cy="97.2" r="0.4" fill="#7a8a9a" opacity="0.8"/><circle cx="5.8" cy="95.5" r="0.8" fill="#e0b070" opacity="0.8"/><circle cx="132.4" cy="100.8" r="0.7" fill="#9fb4c8" opacity="0.8"/><circle cx="135.4" cy="112.7" r="0.4" fill="#e0b070" opacity="0.8"/><circle cx="116.5" cy="76.5" r="0.8" fill="#7a8a9a" opacity="0.8"/><circle cx="62.0" cy="117.1" r="0.4" fill="#a06030" opacity="0.8"/><circle cx="122.4" cy="78.7" r="0.7" fill="#7a8a9a" opacity="0.8"/><circle cx="55.3" cy="127.1" r="0.6" fill="#9fb4c8" opacity="0.8"/><circle cx="152.9" cy="113.9" r="0.9" fill="#e0b070" opacity="0.8"/><circle cx="23.2" cy="54.5" r="0.8" fill="#d8d8d0" opacity="0.8"/><circle cx="69.3" cy="83.3" r="0.8" fill="#e0b070" opacity="0.8"/><circle cx="100.3" cy="64.6" r="0.7" fill="#9fb4c8" opacity="0.8"/><circle cx="124.3" cy="94.8" r="0.9" fill="#9fb4c8" opacity="0.8"/><circle cx="12.6" cy="68.1" r="0.9" fill="#a06030" opacity="0.8"/><circle cx="30.6" cy="97.0" r="0.9" fill="#9fb4c8" opacity="0.8"/><circle cx="166.0" cy="105.1" r="0.7" fill="#c98a3a" opacity="0.8"/><circle cx="143.4" cy="77.6" r="0.4" fill="#9fb4c8" opacity="0.8"/><circle cx="93.4" cy="110.1" r="0.7" fill="#e0b070" opacity="0.8"/><circle cx="120.5" cy="70.2" r="0.5" fill="#e0b070" opacity="0.8"/><circle cx="152.7" cy="74.9" r="0.6" fill="#c98a3a" opacity="0.8"/><circle cx="33.6" cy="108.3" r="0.9" fill="#a06030" opacity="0.8"/><circle cx="8.3" cy="59.4" r="0.8" fill="#a06030" opacity="0.8"/><circle cx="58.3" cy="64.1" r="0.4" fill="#a06030" opacity="0.8"/><circle cx="109.9" cy="55.1" r="0.5" fill="#c98a3a" opacity="0.8"/><circle cx="36.3" cy="78.2" r="0.7" fill="#7a8a9a" opacity="0.8"/><circle cx="83.2" cy="99.1" r="0.8" fill="#e0b070" opacity="0.8"/><circle cx="9.8" cy="84.7" r="0.3" fill="#7a8a9a" opacity="0.8"/><circle cx="104.8" cy="111.4" r="0.9" fill="#d8d8d0" opacity="0.8"/><circle cx="43.9" cy="88.3" r="0.3" fill="#9fb4c8" opacity="0.8"/><circle cx="96.5" cy="127.1" r="0.3" fill="#a06030" opacity="0.8"/><circle cx="121.4" cy="115.8" r="0.4" fill="#c98a3a" opacity="0.8"/><circle cx="26.7" cy="64.6" r="0.8" fill="#c98a3a" opacity="0.8"/><circle cx="61.2" cy="80.8" r="0.5" fill="#7a8a9a" opacity="0.8"/><circle cx="100.6" cy="95.1" r="0.7" fill="#a06030" opacity="0.8"/><circle cx="98.3" cy="71.0" r="0.7" fill="#7a8a9a" opacity="0.8"/><circle cx="81.7" cy="56.3" r="0.7" fill="#7a8a9a" opacity="0.8"/><circle cx="132.1" cy="126.3" r="0.6" fill="#9fb4c8" opacity="0.8"/><circle cx="61.8" cy="93.2" r="0.5" fill="#9fb4c8" opacity="0.8"/><circle cx="1.5" cy="89.2" r="0.7" fill="#9fb4c8" opacity="0.8"/><circle cx="25.8" cy="100.5" r="0.5" fill="#c98a3a" opacity="0.8"/></g>
<g filter="url(#bl2)">
<path d="M10,92 L14,104 L28,98" fill="none" stroke="#8a9098" stroke-width="1.4"/>
<rect x="82" y="94" width="10" height="12" fill="url(#glow1)"/>
<rect x="135" y="115" width="14" height="10" fill="url(#glow1)"/>
<rect x="112" y="95" width="10" height="4" fill="#9fb4bc" opacity="0.7"/>
<rect x="72" y="107" width="10" height="6" fill="#a0b4c8" opacity="0.6"/>
</g>
<g filter="url(#bl2)">
<rect x="-3" y="-3" width="177" height="29" fill="url(#sky)"/>
<g filter="url(#bl4)"><ellipse cx="112" cy="8" rx="40" ry="7" fill="#b0c2cd" opacity="0.5"/><ellipse cx="30" cy="12" rx="45" ry="9" fill="#3a5b70" opacity="0.55"/><path d="M110,26 L174,10 L174,26 Z" fill="#3a5568" opacity="0.8"/></g>
</g>
<rect x="-3" y="25" width="177" height="21" fill="url(#band)" filter="url(#bl)"/>
<g filter="url(#bl2)">
<path d="M-3,33 Q60,31 174,35 L174,38 Q60,35 -3,37 Z" fill="#1d2f3b" opacity="0.45"/>
<path d="M-3,28 Q90,30 174,27 L174,29 Q90,32 -3,30 Z" fill="#3d5768" opacity="0.35"/>
</g>
<ellipse cx="150" cy="42" rx="50" ry="4" fill="#6c6470" opacity="0.35" filter="url(#bl4)"/>
<g filter="url(#bl2)"><rect x="-3" y="45" width="177" height="7" fill="#3a434b"/><rect x="100" y="46" width="74" height="6" fill="#56606a" opacity="0.6"/></g>
</g>
</g></defs></svg>
<div class="hdr">
<svg style="position:absolute;left:0;top:0" width="160" height="90" viewBox="0 0 160 90"><path fill="#fe2f10" d="M116.7,24.2 C108,20.5 102,19.5 97,19.7 C88,20 81.5,25.5 82,33 C82.5,40 87,45 91,50 C95,55 97,60 95,64 C92,69 85,71 78.6,71.6 C90,72 100,69 102.5,64 C104.5,59 102,53 98,48 C94,43 90.5,39 91.5,33 C92.5,27 98,24.3 104,24 C109,23.7 113,23.8 116.7,24.2 Z"/><path fill="#0f66d0" d="M132.6,24.6 C122,30 110,42 106.5,53 C105,60 108,67.5 114,68 C120,68.5 130,58 138,41 C130,52 122,62 117.5,62 C113,62 112,56 113.5,51 C116,42 123,32 132.6,24.6 Z"/></svg>
<div class="sitename">598资讯</div>
<div class="slogan">做一流游戏资讯网站</div>
<div class="toplinks" style="left:1128px">后台管理</div>
<div class="sep"></div>
<div class="toplinks" style="left:1210px">退出</div>
<div class="hline"></div>
<div class="nav on" style="left:78px">首页</div>
<div class="navbar"></div>
<div class="nav" style="left:147px">游戏资讯</div>
<div class="nav" style="left:247px">洪荒ol</div>
<div class="nav" style="left:329px">游戏周边</div>
<svg class="search" width="18" height="18" viewBox="0 0 18 18"><circle cx="7.5" cy="6.6" r="4.9" fill="none" stroke="#111" stroke-width="1.6"/><line x1="10.9" y1="10.1" x2="15.6" y2="14.8" stroke="#111" stroke-width="1.7" stroke-linecap="butt"/></svg>
</div>
<div class="card" style="left:58px;top:159px;width:870px;height:760px">
<div class="chead"><div class="ctitle" style="left:20px">洪荒ol</div><div class="more">更多</div></div>
<div class="art" style="top:41px;height:169px;background:#f6f9fc"><div class="thumb" style="left:20px;top:20px"><svg width="171" height="128"><use href="#cityimg"/></svg><div class="ttxt"><div style="position:absolute;left:-40px;width:251px;top:51px;text-align:center">探索无尽乐趣，好玩的传奇手游，探</div><div style="position:absolute;left:-40px;width:251px;top:66px;text-align:center">索传奇手游的无尽乐趣！</div></div></div><div class="atitle" style="left:210px;top:26px">探索无尽乐趣，好玩的传奇手游，探索传奇手游的无尽乐趣！</div><div class="aex" style="left:210px;top:67px;width:640px">探索传奇手游的无尽乐趣，尽享精彩好玩的传奇游戏体验，这些手游为玩家带来无尽的冒险和刺激，让</div><div class="aex" style="left:210px;top:88px;width:640px">玩家在虚拟世界中畅游，享受游戏的乐趣，每一款传奇手游都拥有独特的玩法和特色，让玩家在游戏…</div><div class="meta" style="left:210px;top:124px"><span class="mi c1"><svg class="ic" width="12" height="12" viewBox="0 0 12 12" style="margin-left:1px;margin-right:1.6px"><g fill="#999"><rect x="0" y="1.15" width="1.2" height="1.3"/><rect x="2.2" y="1.15" width="4.8" height="1.3"/><rect x="0" y="4.85" width="1.2" height="1.3"/><rect x="2.2" y="4.85" width="7.5" height="1.3"/><rect x="0" y="8.35" width="1.2" height="1.3"/><rect x="2.2" y="8.35" width="9.1" height="1.3"/></g></svg>洪荒ol</span><span class="mi"><svg class="ic" width="11" height="12" viewBox="0 0 11 12" style="margin-right:3px"><path d="M4.3,0.5 H10.2 V6.7 A3.8,3.8 0 0 1 6.4,10.5 H0.5 V4.3 A3.8,3.8 0 0 1 4.3,0.5 Z" fill="none" stroke="#999" stroke-width="1"/><circle cx="8.2" cy="3" r="0.7" fill="#999"/></svg>传奇手游</span><span class="mi">探索乐趣</span><span class="mi">好玩的传奇手游好玩的传奇手游有哪些</span></div><div class="meta r" style="top:124px"><span class="mi" style="margin-right:21px"><svg class="ic" width="12" height="12" viewBox="0 0 12 12" style="margin-right:3px"><ellipse cx="5.8" cy="5.25" rx="5.25" ry="4.1" fill="none" stroke="#999" stroke-width="1.15"/><circle cx="5.8" cy="5.4" r="1.8" fill="none" stroke="#999" stroke-width="1.15"/></svg>365</span><svg class="ic" width="11" height="12" viewBox="0 0 11 12" style="margin-right:4px"><rect x="0.5" y="1.5" width="9.7" height="8.6" fill="none" stroke="#999" stroke-width="1"/><line x1="0.5" y1="3.6" x2="10.2" y2="3.6" stroke="#999" stroke-width="1"/><line x1="3.4" y1="0" x2="3.4" y2="1.5" stroke="#999" stroke-width="1"/><line x1="7.6" y1="0" x2="7.6" y2="1.5" stroke="#999" stroke-width="1"/><g fill="#999"><circle cx="2.3" cy="5.6" r="0.65"/><circle cx="5.3" cy="5.6" r="0.65"/><circle cx="8.3" cy="5.6" r="0.65"/><circle cx="2.3" cy="7.8" r="0.65"/><circle cx="5.3" cy="7.8" r="0.65"/><circle cx="8.3" cy="7.8" r="0.65"/></g></svg><span class="dt">2025-12-01 18:30:14</span></div></div><div class="art" style="top:210px;height:181px;background:#fff"><div class="thumb" style="left:20px;top:20px"><svg width="171" height="128"><use href="#cityimg"/></svg><div class="ttxt"><div style="position:absolute;left:-40px;width:251px;top:44px;text-align:center">女生最爱的好玩手游游戏排行榜前十</div><div style="position:absolute;left:-40px;width:251px;top:58px;text-align:center">名，女生最爱的好玩手游游戏排行榜</div><div style="position:absolute;left:-40px;width:251px;top:74px;text-align:center">前十名</div></div></div><div class="atitle" style="left:210px;top:26px">女生最爱的好玩手游游戏排行榜前十名，女生最爱的好玩手游游戏排行榜前十名</div><div class="aex" style="left:210px;top:67px;width:640px">女生最爱的好玩手游游戏排行榜前十名包括：王者荣耀、和平精英、梦幻西游、明日方舟、崩坏3、阴阳</div><div class="aex" style="left:210px;top:88px;width:640px">师、闪耀暖暖、恋与制作人、开心消消乐和开心水族箱等，这些游戏涵盖了多种类型，如角色扮演、…</div><div class="meta" style="left:210px;top:124px"><span class="mi c1"><svg class="ic" width="12" height="12" viewBox="0 0 12 12" style="margin-left:1px;margin-right:1.6px"><g fill="#999"><rect x="0" y="1.15" width="1.2" height="1.3"/><rect x="2.2" y="1.15" width="4.8" height="1.3"/><rect x="0" y="4.85" width="1.2" height="1.3"/><rect x="2.2" y="4.85" width="7.5" height="1.3"/><rect x="0" y="8.35" width="1.2" height="1.3"/><rect x="2.2" y="8.35" width="9.1" height="1.3"/></g></svg>洪荒ol</span><span class="mi"><svg class="ic" width="11" height="12" viewBox="0 0 11 12" style="margin-right:3px"><path d="M4.3,0.5 H10.2 V6.7 A3.8,3.8 0 0 1 6.4,10.5 H0.5 V4.3 A3.8,3.8 0 0 1 4.3,0.5 Z" fill="none" stroke="#999" stroke-width="1"/><circle cx="8.2" cy="3" r="0.7" fill="#999"/></svg>女生最爱手游</span><span class="mi">好玩手游游戏排行榜</span><span class="mi">好玩的手游游戏排行榜前十名女生好玩的手游推荐女</span></div><div class="meta r" style="top:124px"><svg class="ic" width="12" height="12" viewBox="0 0 12 12" style="margin-right:3px"><ellipse cx="5.8" cy="5.25" rx="5.25" ry="4.1" fill="none" stroke="#999" stroke-width="1.15"/><circle cx="5.8" cy="5.4" r="1.8" fill="none" stroke="#999" stroke-width="1.15"/></svg>750</div><div class="meta r" style="top:142px"><svg class="ic" width="11" height="12" viewBox="0 0 11 12" style="margin-right:4px"><rect x="0.5" y="1.5" width="9.7" height="8.6" fill="none" stroke="#999" stroke-width="1"/><line x1="0.5" y1="3.6" x2="10.2" y2="3.6" stroke="#999" stroke-width="1"/><line x1="3.4" y1="0" x2="3.4" y2="1.5" stroke="#999" stroke-width="1"/><line x1="7.6" y1="0" x2="7.6" y2="1.5" stroke="#999" stroke-width="1"/><g fill="#999"><circle cx="2.3" cy="5.6" r="0.65"/><circle cx="5.3" cy="5.6" r="0.65"/><circle cx="8.3" cy="5.6" r="0.65"/><circle cx="2.3" cy="7.8" r="0.65"/><circle cx="5.3" cy="7.8" r="0.65"/><circle cx="8.3" cy="7.8" r="0.65"/></g></svg><span class="dt">2025-12-01 18:00:20</span></div></div><div class="art" style="top:391px;height:181px;background:#fff"><div class="atitle" style="left:20px;top:26px">2020年最受欢迎的回合手游大盘点，2020年最受欢迎的回合手游大盘点</div><div class="aex" style="left:20px;top:67px;width:830px">2020年最受欢迎的回合手游大盘点，涵盖了多款热门游戏，这些游戏以其丰富的游戏内容、独特的玩法和精美的画面吸引了大量玩家，</div><div class="aex" style="left:20px;top:88px;width:830px">其中包括《梦幻西游》、《神武》、《问道》等经典IP续作，也有《明日方舟》、《原...</div><div class="meta" style="left:20px;top:124px"><span class="mi c1"><svg class="ic" width="12" height="12" viewBox="0 0 12 12" style="margin-left:1px;margin-right:1.6px"><g fill="#999"><rect x="0" y="1.15" width="1.2" height="1.3"/><rect x="2.2" y="1.15" width="4.8" height="1.3"/><rect x="0" y="4.85" width="1.2" height="1.3"/><rect x="2.2" y="4.85" width="7.5" height="1.3"/><rect x="0" y="8.35" width="1.2" height="1.3"/><rect x="2.2" y="8.35" width="9.1" height="1.3"/></g></svg>洪荒ol</span><span class="mi"><svg class="ic" width="11" height="12" viewBox="0 0 11 12" style="margin-right:3px"><path d="M4.3,0.5 H10.2 V6.7 A3.8,3.8 0 0 1 6.4,10.5 H0.5 V4.3 A3.8,3.8 0 0 1 4.3,0.5 Z" fill="none" stroke="#999" stroke-width="1"/><circle cx="8.2" cy="3" r="0.7" fill="#999"/></svg>2020年最受欢迎</span><span class="mi">回合手游大盘点</span><span class="mi">2020年最受欢迎的回合手游2020年最受欢迎的回合手游是什么</span></div><div class="meta r" style="top:124px"><svg class="ic" width="12" height="12" viewBox="0 0 12 12" style="margin-right:3px"><ellipse cx="5.8" cy="5.25" rx="5.25" ry="4.1" fill="none" stroke="#999" stroke-width="1.15"/><circle cx="5.8" cy="5.4" r="1.8" fill="none" stroke="#999" stroke-width="1.15"/></svg>201</div><div class="meta r" style="top:142px"><svg class="ic" width="11" height="12" viewBox="0 0 11 12" style="margin-right:4px"><rect x="0.5" y="1.5" width="9.7" height="8.6" fill="none" stroke="#999" stroke-width="1"/><line x1="0.5" y1="3.6" x2="10.2" y2="3.6" stroke="#999" stroke-width="1"/><line x1="3.4" y1="0" x2="3.4" y2="1.5" stroke="#999" stroke-width="1"/><line x1="7.6" y1="0" x2="7.6" y2="1.5" stroke="#999" stroke-width="1"/><g fill="#999"><circle cx="2.3" cy="5.6" r="0.65"/><circle cx="5.3" cy="5.6" r="0.65"/><circle cx="8.3" cy="5.6" r="0.65"/><circle cx="2.3" cy="7.8" r="0.65"/><circle cx="5.3" cy="7.8" r="0.65"/><circle cx="8.3" cy="7.8" r="0.65"/></g></svg><span class="dt">2025-12-01 17:30:14</span></div></div><div class="art" style="top:572px;height:181px;background:#fff"><div class="thumb" style="left:20px;top:20px"><svg width="171" height="128"><use href="#cityimg"/></svg><div class="ttxt"><div style="position:absolute;left:-40px;width:251px;top:51px;text-align:center">适合女生玩的回合制手游推荐，精选</div><div style="position:absolute;left:-40px;width:251px;top:66px;text-align:center">女生回合制手游推荐</div></div></div><div class="atitle" style="left:210px;top:26px">适合女生玩的回合制手游推荐，精选女生回合制手游推荐</div><div class="aex" style="left:210px;top:67px;width:640px">精选适合女生玩的回合制手游推荐，包括多种类型，如角色扮演、养成、策略等，这些游戏具有简单易</div><div class="aex" style="left:210px;top:88px;width:640px">上手、画面精美、玩法多样等特点，适合女生放松心情、享受游戏乐趣，推荐的游戏包括《梦幻西…</div><div class="meta" style="left:210px;top:124px"><span class="mi c1"><svg class="ic" width="12" height="12" viewBox="0 0 12 12" style="margin-left:1px;margin-right:1.6px"><g fill="#999"><rect x="0" y="1.15" width="1.2" height="1.3"/><rect x="2.2" y="1.15" width="4.8" height="1.3"/><rect x="0" y="4.85" width="1.2" height="1.3"/><rect x="2.2" y="4.85" width="7.5" height="1.3"/><rect x="0" y="8.35" width="1.2" height="1.3"/><rect x="2.2" y="8.35" width="9.1" height="1.3"/></g></svg>洪荒ol</span><span class="mi"><svg class="ic" width="11" height="12" viewBox="0 0 11 12" style="margin-right:3px"><path d="M4.3,0.5 H10.2 V6.7 A3.8,3.8 0 0 1 6.4,10.5 H0.5 V4.3 A3.8,3.8 0 0 1 4.3,0.5 Z" fill="none" stroke="#999" stroke-width="1"/><circle cx="8.2" cy="3" r="0.7" fill="#999"/></svg>女生回合制手游</span><span class="mi">精选推荐</span><span class="mi">适合女生玩的回合制手游适合女生玩的回合制手游游戏</span></div><div class="meta r" style="top:124px"><svg class="ic" width="12" height="12" viewBox="0 0 12 12" style="margin-right:3px"><ellipse cx="5.8" cy="5.25" rx="5.25" ry="4.1" fill="none" stroke="#999" stroke-width="1.15"/><circle cx="5.8" cy="5.4" r="1.8" fill="none" stroke="#999" stroke-width="1.15"/></svg>281</div><div class="meta r" style="top:142px"><svg class="ic" width="11" height="12" viewBox="0 0 11 12" style="margin-right:4px"><rect x="0.5" y="1.5" width="9.7" height="8.6" fill="none" stroke="#999" stroke-width="1"/><line x1="0.5" y1="3.6" x2="10.2" y2="3.6" stroke="#999" stroke-width="1"/><line x1="3.4" y1="0" x2="3.4" y2="1.5" stroke="#999" stroke-width="1"/><line x1="7.6" y1="0" x2="7.6" y2="1.5" stroke="#999" stroke-width="1"/><g fill="#999"><circle cx="2.3" cy="5.6" r="0.65"/><circle cx="5.3" cy="5.6" r="0.65"/><circle cx="8.3" cy="5.6" r="0.65"/><circle cx="2.3" cy="7.8" r="0.65"/><circle cx="5.3" cy="7.8" r="0.65"/><circle cx="8.3" cy="7.8" r="0.65"/></g></svg><span class="dt">2025-12-01 17:00:15</span></div></div>
</div>
<div class="card" style="left:948px;top:159px;width:310px;height:416px">
<div class="chead"><div class="ctitle" style="left:15px">热门文章</div></div>
<div class="hot" style="top:57px"><span class="badge" style="background:#ff4040">1</span>手游洪荒OL，探索奇幻世界的冒险之旅</div><div class="hot" style="top:93px"><span class="badge" style="background:#ff8a3d">2</span>洪荒OL正式更名，开启全新篇章</div><div class="hot" style="top:129px"><span class="badge" style="background:#7cc540">3</span>洪荒OL畅快西游下载问题解析，洪荒…</div><div class="hot" style="top:165px"><span class="badge" style="background:#c8c8c8">4</span>鲁米，探寻诗歌与哲学的交融之美，鲁…</div><div class="hot" style="top:201px"><span class="badge" style="background:#c8c8c8">5</span>斯蒂克，探索未知的领域，斯蒂克，未…</div><div class="hot" style="top:237px"><span class="badge" style="background:#c8c8c8">6</span>洪荒OL英雄十二阶进阶全解析，你需…</div><div class="hot" style="top:273px"><span class="badge" style="background:#c8c8c8">7</span>生存战，挑战与适应的时代，生存战，…</div><div class="hot" style="top:309px"><span class="badge" style="background:#c8c8c8">8</span>MoonCell，探索月球的新纪元，Moon…</div><div class="hot" style="top:345px"><span class="badge" style="background:#c8c8c8">9</span>探索Argee游戏论坛的独特魅力，Arge…</div><div class="hot" style="top:381px"><span class="badge" style="background:#c8c8c8">10</span>异次元游戏论坛，探索虚拟世界的无限…</div>
</div>
<div class="card" style="left:948px;top:595px;width:310px;height:320px">
<div class="chead"><div class="ctitle" style="left:15px">随机文章</div></div>
<div class="hot" style="top:57px">洪荒ol孔宣，神秘而强大的存在</div><div class="hot" style="top:93px">洪荒OL全面攻略，从入门到精通</div><div class="hot" style="top:129px">洪荒ol游戏无法进入问题解析</div><div class="hot" style="top:165px">洪荒ol中的龙王，神秘而强大的存在</div><div class="hot" style="top:201px">洪荒OL苹果下不了的原因及解决方案</div><div class="hot" style="top:237px">美国游戏论坛，玩家交流的热土</div><div class="hot" style="top:273px">OPPO游戏论坛，玩家交流的新天地</div>
</div>
</body></html>
